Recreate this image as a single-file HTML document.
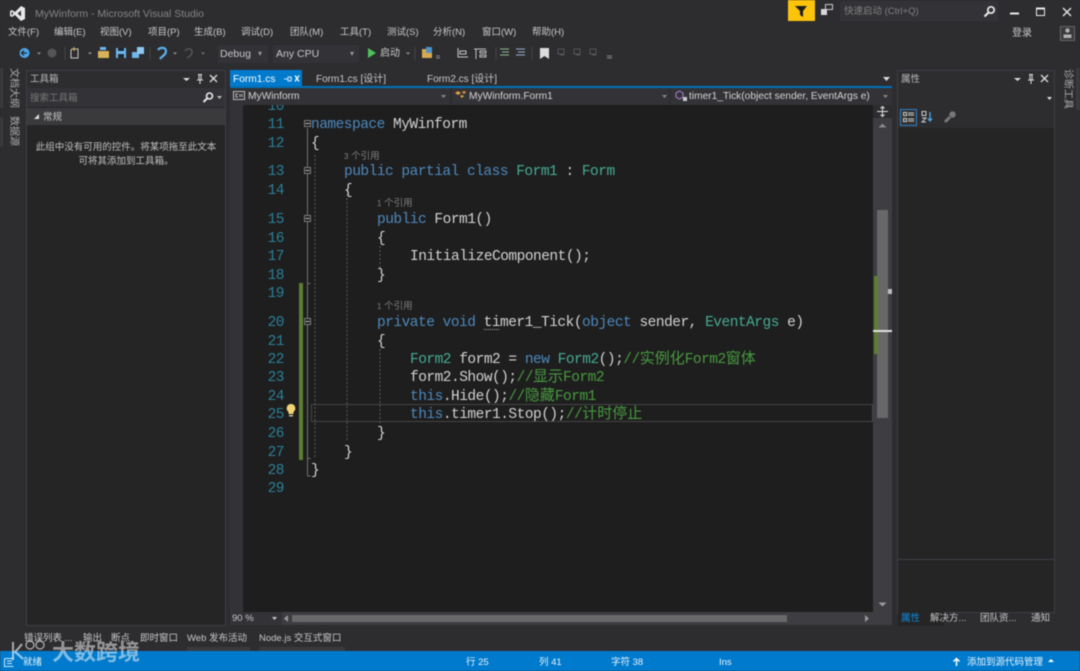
<!DOCTYPE html>
<html><head><meta charset="utf-8">
<style>
html,body{margin:0;padding:0;width:1080px;height:671px;overflow:hidden;background:#2d2d30}
#r{position:absolute;left:0;top:0;width:1080px;height:671px;overflow:hidden;background:#2d2d30;filter:blur(.5px);font-family:"Liberation Sans","Noto Sans CJK SC",sans-serif;font-size:9.5px;color:#c8c8c8}
.t,.b,.l,.n,svg{position:absolute}
.t{white-space:nowrap;line-height:14px}
.b{box-sizing:border-box}
.l{font-family:"Liberation Mono","Noto Sans CJK SC",monospace;font-size:14.5px;letter-spacing:-.5px;line-height:18px;height:18px;white-space:pre;color:#d2d2d2}
.n{font-family:"Liberation Mono",monospace;font-size:14.5px;letter-spacing:-.5px;line-height:18px;color:#2a8098;width:28px;text-align:right;left:256px}
.k{color:#4d88bd}.y{color:#46ab93}.g{color:#489a40}
.g i{font-style:normal;font-size:15px;letter-spacing:0}
.r{font-size:9.5px;color:#808080}
.v{writing-mode:vertical-rl;text-orientation:sideways;font-size:10px;line-height:12px;color:#aaa;position:absolute;white-space:nowrap}
</style></head><body><div id="r">

<!-- title -->
<svg style="left:9px;top:5px" width="17" height="17" viewBox="0 0 17 17"><path d="M12 1l4 2v11l-4 2-6-6-3 2-2-1V6l2-1 3 2zM12 5.500L8.500 8.500 12 11.500zM2.500 6.500v4L4.500 8.500z" fill="#e8e8e8" fill-rule="evenodd"/></svg>
<div class="t" style="left:35px;top:7px;color:#858585;font-size:10.5px">MyWinform - Microsoft Visual Studio</div>
<div class="b" style="left:788px;top:0;width:27px;height:21px;background:#fcc30b"></div>
<svg style="left:787px;top:2px" width="28" height="18" viewBox="0 0 28 18"><path d="M8 4h12l-4 5v6l-3-2V9z" fill="#1c1c1c"/></svg>
<svg style="left:820px;top:3px" width="14" height="14" viewBox="0 0 14 14"><rect x="5.500" y="1.500" width="7" height="5" fill="none" stroke="#c8c8c8"/><rect x="1" y="6" width="6" height="6" fill="#d8d8d8"/></svg>
<div class="b" style="left:840px;top:1px;width:158px;height:20px;background:#333337"></div>
<div class="t" style="left:844px;top:5px;color:#808080;font-size:9.500px">快速启动 (Ctrl+Q)</div>
<svg style="left:983px;top:5px" width="13" height="13" viewBox="0 0 13 13"><circle cx="8" cy="5" r="3.200" fill="none" stroke="#e8e8e8" stroke-width="1.700"/><path d="M5.500 7.500L1.500 11.500" stroke="#e8e8e8" stroke-width="2.200"/></svg>
<svg style="left:1009px;top:5px" width="11" height="14" viewBox="0 0 11 14"><path d="M1 8.500h9" stroke="#e8e8e8" stroke-width="2"/></svg>
<svg style="left:1034px;top:5px" width="13" height="14" viewBox="0 0 13 14"><path d="M2.500 3.500h8v7h-8z" fill="none" stroke="#e8e8e8"/><path d="M2 3.500h9" stroke="#e8e8e8" stroke-width="2"/></svg>
<svg style="left:1061px;top:5px" width="13" height="14" viewBox="0 0 13 14"><path d="M2 3l8 8M10 3l-8 8" stroke="#e8e8e8" stroke-width="1.300"/></svg>

<!-- menu -->
<div class="t" style="left:8px;top:26px">文件(F)</div>
<div class="t" style="left:54px;top:26px">编辑(E)</div>
<div class="t" style="left:100px;top:26px">视图(V)</div>
<div class="t" style="left:148px;top:26px">项目(P)</div>
<div class="t" style="left:194px;top:26px">生成(B)</div>
<div class="t" style="left:241px;top:26px">调试(D)</div>
<div class="t" style="left:290px;top:26px">团队(M)</div>
<div class="t" style="left:340px;top:26px">工具(T)</div>
<div class="t" style="left:387px;top:26px">测试(S)</div>
<div class="t" style="left:433px;top:26px">分析(N)</div>
<div class="t" style="left:482px;top:26px">窗口(W)</div>
<div class="t" style="left:532px;top:26px">帮助(H)</div>
<div class="t" style="left:1012px;top:27px;font-size:10px">登录</div>
<div class="b" style="left:1060px;top:26px;width:15px;height:15px;border:1px solid #666;background:#3a3a3c"></div>
<svg style="left:1061px;top:27px" width="13" height="13" viewBox="0 0 13 13"><circle cx="6.500" cy="3.500" r="2.200" fill="#b0b0b0"/><path d="M2.500 11V7.500h8V11z" fill="#b0b0b0"/></svg>

<!-- toolbar -->
<svg style="left:14px;top:44px" width="600" height="18" viewBox="0 0 600 18">
<circle cx="10.500" cy="9" r="5" fill="#4ea6ea"/><path d="M13 9H8M10 6.500L7.500 9l2.500 2.500" stroke="#1e2a33" fill="none" stroke-width="1.200"/>
<path d="M23 8.500h4l-2 2z" fill="#999"/>
<circle cx="38" cy="9" r="4.500" fill="#555"/>
<path d="M51 3v13" stroke="#444"/>
<path d="M58 5h6v9h-7V6z" fill="none" stroke="#c8c8c8"/><path d="M60 3v4M58 5h4" stroke="#e0c060"/>
<path d="M74 8.500h4l-2 2z" fill="#999"/>
<path d="M84 7h11v7H84z" fill="#d8b25a"/><path d="M86 3h6v3h-6z" fill="#6cb8ee"/>
<path d="M102 4h10v10h-10z" fill="#6cb8ee"/><path d="M104 4h6v3h-6zM104 10h6v4h-6z" fill="#1e2a33"/>
<path d="M118 8h7v6h-7z" fill="#6cb8ee"/><path d="M123 3h7v7h-7z" fill="#8ec8f0"/>
<path d="M136 3v13" stroke="#444"/>
<path d="M144 6c2-3 8-3 8 1s-4 5-6 8" fill="none" stroke="#5ab0ee" stroke-width="2.200"/>
<path d="M159 8.500h4l-2 2z" fill="#999"/>
<path d="M171 7c2-3 7-3 7 1s-3 4-5 6" fill="none" stroke="#555" stroke-width="1.500"/>
<path d="M187 8.500h4l-2 2z" fill="#777"/>
<path d="M354 4l8 5-8 5z" fill="#4ec25a"/>
<path d="M392 8.500h4l-2 2z" fill="#999"/>
<path d="M401 3v13" stroke="#444"/>
<path d="M408 5h10v9h-10z" fill="#d8a94e"/><path d="M412 3h6v6h-6z" fill="#4e92cc"/>
<path d="M422 14h4M422 12h4" stroke="#888"/>
<path d="M444 4v9h10M446 7h6v3h-6z" fill="none" stroke="#c8c8c8"/>
<path d="M460 5h12M462 5v10M466 7h6v2h-6zM466 11h6v2h-6z" fill="none" stroke="#c0c0c0"/>
<path d="M482 3v13" stroke="#444"/>
<path d="M486 5h9M488 8h7M486 11h9" stroke="#8fb88f"/>
<path d="M502 5h9M504 8h7M502 11h9" stroke="#9ab0c8"/>
<path d="M518 3v13" stroke="#444"/>
<path d="M526 4h9v11l-4.500-3-4.500 3z" fill="#dcdcdc"/>
<path d="M544 5h6v5h-6zM546 11h4" stroke="#555" fill="none"/><path d="M560 5h6v5h-6zM562 11h4" stroke="#555" fill="none"/><path d="M576 5h6v5h-6zM578 11h4" stroke="#555" fill="none"/>
<path d="M593 12h5M593 14h5" stroke="#888"/>
</svg>
<div class="b" style="left:218px;top:45px;width:50px;height:18px;background:#333337"></div>
<div class="t" style="left:220px;top:47px;font-size:10.500px">Debug</div>
<div class="t" style="left:258px;top:47px;font-size:8px;color:#999">▾</div>
<div class="b" style="left:273px;top:45px;width:86px;height:18px;background:#333337"></div>
<div class="t" style="left:276px;top:47px;font-size:10.500px">Any CPU</div>
<div class="t" style="left:350px;top:47px;font-size:8px;color:#999">▾</div>
<div class="t" style="left:380px;top:47px;font-size:10px">启动</div>

<!-- left rail -->
<div class="b" style="left:0;top:68px;width:3px;height:40px;background:#3a3a3d"></div>
<div class="b" style="left:0;top:117px;width:3px;height:30px;background:#3a3a3d"></div>
<div class="v" style="left:7px;top:68px">文档大纲</div>
<div class="v" style="left:7px;top:116px">数据源</div>

<!-- toolbox -->
<div class="b" style="left:26px;top:70px;width:200px;height:556px;background:#252526;border:1px solid #3f3f46"></div>
<div class="b" style="left:27px;top:71px;width:198px;height:17px;background:#2d2d30"></div>
<div class="t" style="left:30px;top:73px;font-size:9.500px;color:#bbb">工具箱</div>
<svg style="left:180px;top:73px" width="42" height="12" viewBox="0 0 42 12"><path d="M3 5h7l-3.500 3z" fill="#ddd"/><path d="M18 1.500h4M19 2v5h2V2M17 7h6M20 7v4" stroke="#ddd" fill="none"/><path d="M30 2l7 7M37 2l-7 7" stroke="#ddd" stroke-width="1.300"/></svg>
<div class="b" style="left:27px;top:88px;width:198px;height:19px;background:#333337"></div>
<div class="t" style="left:30px;top:92px;font-size:9.500px;color:#777">搜索工具箱</div>
<svg style="left:202px;top:91px" width="22" height="13" viewBox="0 0 22 13"><circle cx="7.500" cy="5" r="3" fill="none" stroke="#e8e8e8" stroke-width="1.600"/><path d="M5 7.500L1.500 11" stroke="#e8e8e8" stroke-width="2"/><path d="M15 5h5l-2.500 3z" fill="#bbb"/></svg>
<div class="b" style="left:27px;top:108px;width:198px;height:17px;background:#3a3a3d"></div>
<svg style="left:32px;top:112px" width="9" height="9" viewBox="0 0 9 9"><path d="M7 2v5H2z" fill="#ddd"/></svg>
<div class="t" style="left:43px;top:111px;font-size:9.500px">常规</div>
<div class="t" style="left:27px;top:141px;width:198px;text-align:center;font-size:9.500px;color:#c0c0c0;line-height:14px;white-space:normal">此组中没有可用的控件。将某项拖至此文本<br>可将其添加到工具箱。</div>

<!-- tabs -->
<div class="b" style="left:230px;top:70px;width:72px;height:17px;background:#007acc"></div>
<div class="t" style="left:233px;top:73px;color:#fff;font-size:10.200px">Form1.cs</div>
<svg style="left:282px;top:74px" width="18" height="10" viewBox="0 0 18 10"><path d="M2 5h4M6 3v4h3V3zM9 5h1" stroke="#cfe8f8" fill="none"/><path d="M13 1.500l4 6M17 1.500l-4 6" stroke="#fff" stroke-width="1.200"/></svg>
<div class="t" style="left:316px;top:73px;font-size:10px">Form1.cs [设计]</div>
<div class="t" style="left:427px;top:73px;font-size:10px">Form2.cs [设计]</div>
<svg style="left:882px;top:76px" width="9" height="6" viewBox="0 0 9 6"><path d="M1 1h7L4.500 5z" fill="#ddd"/></svg>
<div class="b" style="left:230px;top:86px;width:662px;height:2px;background:#0070b8"></div>

<!-- dropdown row -->
<div class="b" style="left:230px;top:88px;width:662px;height:17px;background:#333337"></div>
<div class="b" style="left:450px;top:88px;width:2px;height:17px;background:#2d2d30"></div>
<div class="b" style="left:669px;top:88px;width:2px;height:17px;background:#2d2d30"></div>
<svg style="left:233px;top:90px" width="13" height="11" viewBox="0 0 13 11"><rect x=".5" y="1.500" width="11" height="8" fill="none" stroke="#bbb"/><path d="M5 4H3v3h2M7 4v3M9 4v3" stroke="#bbb" fill="none"/></svg>
<div class="t" style="left:248px;top:90px;font-size:10.200px;color:#d4d4d4">MyWinform</div>
<svg style="left:454px;top:90px" width="14" height="12" viewBox="0 0 14 12"><path d="M1 3l3-2 3 2-3 2z" fill="#e0a040"/><path d="M6 6l2-1 2 1-2 2zM8 2l2-1 2 1-2 2z" fill="#e0a040"/></svg>
<div class="t" style="left:469px;top:90px;font-size:10.200px;color:#d4d4d4">MyWinform.Form1</div>
<svg style="left:675px;top:90px" width="13" height="12" viewBox="0 0 13 12"><path d="M4.500 1l3.500 2v4L4.500 9 1 7V3z" fill="none" stroke="#b180d7"/><rect x="8" y="7" width="4" height="4" fill="#ccc"/></svg>
<div class="t" style="left:689px;top:90px;font-size:10.200px;color:#d4d4d4">timer1_Tick(object sender, EventArgs e)</div>
<svg style="left:440px;top:94px" width="8" height="5"><path d="M1 1h5L3.500 4z" fill="#888"/></svg>
<svg style="left:661px;top:94px" width="8" height="5"><path d="M1 1h5L3.500 4z" fill="#888"/></svg>
<svg style="left:882px;top:94px" width="8" height="5"><path d="M1 1h5L3.500 4z" fill="#888"/></svg>

<!-- editor -->
<div class="b" style="left:230px;top:105px;width:13px;height:507px;background:#333337"></div>
<div class="b" style="left:243px;top:105px;width:630px;height:507px;background:#1e1e1e"></div>

<!-- current line -->
<div class="b" style="left:311px;top:404px;width:562px;height:18px;border:1px solid #464646"></div>

<!-- change bar -->
<div class="b" style="left:299px;top:283px;width:3.500px;height:177px;background:#5c7f33"></div>

<!-- outlines & guides -->
<svg style="left:295px;top:105px" width="110" height="385" viewBox="295 105 110 385">
<path d="M307.500 128V476M307.500 476h3M307.500 458.500h3M307.500 283.500h3" stroke="#707070" fill="none"/>
<path d="M315 155V458M347 190V442" stroke="#5c5c5c" stroke-dasharray="2 2" fill="none"/>
<path d="M380 246V268M380 349V425" stroke="#5c5c5c" stroke-dasharray="2 2" fill="none"/>
<g fill="#1e1e1e" stroke="#7d7d7d"><rect x="304.500" y="120.500" width="6" height="6"/><rect x="304.500" y="167.500" width="6" height="6"/><rect x="304.500" y="215.500" width="6" height="6"/><rect x="304.500" y="318.500" width="6" height="6"/></g>
<path d="M305.500 123.500h4M305.500 170.500h4M305.500 218.500h4M305.500 321.500h4" stroke="#c0c0c0"/>
</svg>
<svg style="left:484px;top:328px" width="20" height="3"><path d="M0 1.500h16" stroke="#aaa" stroke-dasharray="1 1"/></svg>
<svg style="left:285px;top:403px" width="12" height="15" viewBox="0 0 12 15"><path d="M6 1a4.300 4.300 0 0 1 2.500 7.800V11h-5V8.800A4.300 4.300 0 0 1 6 1z" fill="#f2d374"/><path d="M4 12h4v1.500H4z" fill="#c8c8a8"/></svg>

<!-- line numbers -->
<div class="n" style="top:98px;height:18px;clip-path:inset(7px 0 0 0)">10</div>
<div class="n" style="top:116px">11</div>
<div class="n" style="top:135px">12</div>
<div class="n" style="top:163px">13</div>
<div class="n" style="top:182px">14</div>
<div class="n" style="top:211px">15</div>
<div class="n" style="top:230px">16</div>
<div class="n" style="top:248px">17</div>
<div class="n" style="top:267px">18</div>
<div class="n" style="top:285px">19</div>
<div class="n" style="top:314px">20</div>
<div class="n" style="top:333px">21</div>
<div class="n" style="top:351px">22</div>
<div class="n" style="top:369px">23</div>
<div class="n" style="top:388px">24</div>
<div class="n" style="top:406px">25</div>
<div class="n" style="top:425px">26</div>
<div class="n" style="top:444px">27</div>
<div class="n" style="top:462px">28</div>
<div class="n" style="top:480px">29</div>

<!-- code -->
<div class="l" style="left:311px;top:116px"><span class="k">namespace</span> MyWinform</div>
<div class="l" style="left:311px;top:135px">{</div>
<div class="t r" style="left:344px;top:150px"><span style="font-size:8px">3</span> 个引用</div>
<div class="l" style="left:344px;top:163px"><span class="k">public partial class</span> <span class="y">Form1</span> : <span class="y">Form</span></div>
<div class="l" style="left:344px;top:182px">{</div>
<div class="t r" style="left:377px;top:197px"><span style="font-size:8px">1</span> 个引用</div>
<div class="l" style="left:377px;top:211px"><span class="k">public</span> Form1()</div>
<div class="l" style="left:377px;top:230px">{</div>
<div class="l" style="left:410px;top:248px">InitializeComponent();</div>
<div class="l" style="left:377px;top:267px">}</div>
<div class="t r" style="left:377px;top:300px"><span style="font-size:8px">1</span> 个引用</div>
<div class="l" style="left:377px;top:314px"><span class="k">private void</span> timer1_Tick(<span class="k">object</span> sender, <span class="y">EventArgs</span> e)</div>
<div class="l" style="left:377px;top:333px">{</div>
<div class="l" style="left:410px;top:351px"><span class="y">Form2</span> form2 = <span class="k">new</span> <span class="y">Form2</span>();<span class="g">//<i>实例化</i>Form2<i>窗体</i></span></div>
<div class="l" style="left:410px;top:369px">form2.Show();<span class="g">//<i>显示</i>Form2</span></div>
<div class="l" style="left:410px;top:388px"><span class="k">this</span>.Hide();<span class="g">//<i>隐藏</i>Form1</span></div>
<div class="l" style="left:410px;top:406px"><span class="k">this</span>.timer1.Stop();<span class="g">//<i>计时停止</i></span></div>
<div class="l" style="left:377px;top:425px">}</div>
<div class="l" style="left:344px;top:444px">}</div>
<div class="l" style="left:311px;top:462px">}</div>

<!-- vscroll -->
<div class="b" style="left:873px;top:105px;width:19px;height:520px;background:#3e3e42"></div>
<div class="b" style="left:873px;top:105px;width:19px;height:13px;background:#2d2d30"></div>
<svg style="left:876px;top:105px" width="13" height="13" viewBox="0 0 13 13"><path d="M1 6.500h11M6.500 1.500v10M4.500 3.500l2-2 2 2M4.500 9.500l2 2 2-2" stroke="#ddd" fill="none"/></svg>
<svg style="left:877px;top:122px" width="11" height="7"><path d="M1.500 5.500h8L5.500 1.500z" fill="#888"/></svg>
<div class="b" style="left:877px;top:210px;width:11px;height:208px;background:#686868"></div>
<div class="b" style="left:874px;top:276px;width:4px;height:78px;background:#5c7f33"></div>
<div class="b" style="left:888px;top:289px;width:4px;height:5px;background:#bdbdbd"></div>
<div class="b" style="left:873px;top:330px;width:19px;height:2px;background:#e0e0e0"></div>
<svg style="left:877px;top:601px" width="11" height="7"><path d="M1.500 1.500h8L5.500 5.500z" fill="#999"/></svg>

<!-- hscroll -->
<div class="b" style="left:230px;top:612px;width:643px;height:13px;background:#3e3e42"></div>
<div class="b" style="left:230px;top:612px;width:52px;height:13px;background:#333337"></div>
<div class="t" style="left:232px;top:612px;font-size:9.500px;line-height:13px">90 %</div>
<svg style="left:271px;top:616px" width="7" height="5"><path d="M1 1h5L3.500 4z" fill="#ccc"/></svg>
<svg style="left:283px;top:614px" width="6" height="9"><path d="M5 1v7L1 4.500z" fill="#999"/></svg>
<div class="b" style="left:292px;top:615px;width:495px;height:7px;background:#686868"></div>
<svg style="left:864px;top:614px" width="6" height="9"><path d="M1 1v7l4-3.500z" fill="#999"/></svg>

<!-- properties -->
<div class="b" style="left:897px;top:70px;width:158px;height:543px;background:#252526;border:1px solid #3f3f46"></div>
<div class="b" style="left:898px;top:71px;width:156px;height:17px;background:#2d2d30"></div>
<div class="t" style="left:901px;top:73px;font-size:9.500px;color:#bbb">属性</div>
<svg style="left:1011px;top:73px" width="42" height="12" viewBox="0 0 42 12"><path d="M3 5h7l-3.500 3z" fill="#ddd"/><path d="M18 1.500h4M19 2v5h2V2M17 7h6M20 7v4" stroke="#ddd" fill="none"/><path d="M30 2l7 7M37 2l-7 7" stroke="#ddd" stroke-width="1.300"/></svg>
<div class="b" style="left:898px;top:88px;width:156px;height:19px;background:#2d2d30"></div>
<svg style="left:1046px;top:96px" width="8" height="5"><path d="M1 1h5L3.500 4z" fill="#ddd"/></svg>
<div class="b" style="left:898px;top:107px;width:156px;height:21px;background:#2d2d30"></div>
<div class="b" style="left:900px;top:109px;width:17px;height:17px;border:1px solid #2f7fc0;background:#333"></div>
<svg style="left:902px;top:111px" width="13" height="13" viewBox="0 0 13 13"><path d="M1.500 1.500h3v3h-3zM1.500 7.500h3v3h-3z" fill="none" stroke="#ccc"/><path d="M6 2h6M6 4h6M6 8h6M6 10h6" stroke="#ccc"/></svg>
<svg style="left:920px;top:110px" width="14" height="14" viewBox="0 0 14 14"><path d="M2 1.500h4v4H2zM2 8h4L2 12h4" fill="none" stroke="#ccc"/><path d="M10 2v9M8 8.500l2 2.500 2-2.500" stroke="#4ea6ea" fill="none" stroke-width="1.300"/></svg>
<svg style="left:943px;top:110px" width="14" height="14" viewBox="0 0 14 14"><circle cx="9.500" cy="4.500" r="3.200" fill="#777"/><path d="M7 7l-5 5" stroke="#777" stroke-width="3"/></svg>
<div class="b" style="left:898px;top:559px;width:156px;height:1px;background:#3f3f46"></div>
<div class="b" style="left:898px;top:612px;width:46px;height:14px;background:#252526"></div>
<div class="t" style="left:901px;top:612px;font-size:9.500px;color:#0e8ce0">属性</div>
<div class="t" style="left:930px;top:612px;font-size:9.500px">解决方...</div>
<div class="t" style="left:980px;top:612px;font-size:9.500px">团队资...</div>
<div class="t" style="left:1031px;top:612px;font-size:9.500px">通知</div>

<!-- right rail -->
<div class="b" style="left:1076px;top:68px;width:4px;height:42px;background:#3a3a3d"></div>
<div class="v" style="left:1061px;top:69px">诊断工具</div>

<!-- bottom tabs -->
<div class="t" style="left:24px;top:632px;font-size:9.500px">错误列表 ...</div>
<div class="t" style="left:83px;top:632px;font-size:9.500px">输出</div>
<div class="t" style="left:111px;top:632px;font-size:9.500px">断点</div>
<div class="t" style="left:140px;top:632px;font-size:9.500px">即时窗口</div>
<div class="t" style="left:187px;top:632px;font-size:9.500px">Web 发布活动</div>
<div class="t" style="left:259px;top:632px;font-size:9.500px">Node.js 交互式窗口</div>
<div class="b" style="left:187px;top:647px;width:63px;height:4px;background:#3a3a3d"></div>
<div class="b" style="left:259px;top:647px;width:86px;height:4px;background:#3a3a3d"></div>

<!-- status -->
<div class="b" style="left:0;top:651px;width:1080px;height:20px;background:#007acc"></div>
<svg style="left:3px;top:657px" width="12" height="11" viewBox="0 0 12 11"><path d="M1.500 1.500h9M1.500 1.500v8h9M4 4h5M4 6.500h5" stroke="#cfe8f8" fill="none"/></svg>
<div class="t" style="left:23px;top:656px;font-size:9.500px;color:#e8f4fc">就绪</div>
<div class="t" style="left:466px;top:656px;font-size:9.500px;color:#e8f4fc">行 25</div>
<div class="t" style="left:539px;top:656px;font-size:9.500px;color:#e8f4fc">列 41</div>
<div class="t" style="left:611px;top:656px;font-size:9.500px;color:#e8f4fc">字符 38</div>
<div class="t" style="left:719px;top:656px;font-size:9.500px;color:#e8f4fc">Ins</div>
<svg style="left:951px;top:656px" width="11" height="11" viewBox="0 0 11 11"><path d="M5.500 10V3M2.500 5.500l3-3 3 3" stroke="#fff" stroke-width="1.500" fill="none"/></svg>
<div class="t" style="left:967px;top:656px;font-size:9.500px;color:#e8f4fc">添加到源代码管理</div>
<svg style="left:1047px;top:658px" width="8" height="5"><path d="M1 4h6L4 1z" fill="#fff"/></svg>

<!-- watermark -->
<svg style="left:8px;top:636px" width="46" height="28" viewBox="0 0 46 28" opacity=".6"><path d="M5 6v18M14 8c-3 4-5 6-7 8 3 2 5 4 8 7" fill="none" stroke="#fff" stroke-width="2"/><circle cx="22" cy="9" r="4" fill="none" stroke="#fff" stroke-width="1.300"/><circle cx="32" cy="9" r="4" fill="none" stroke="#fff" stroke-width="1.300"/></svg>
<div class="t" style="left:52px;top:639px;font-size:22px;line-height:28px;color:rgba(255,255,255,.5);font-weight:bold">大数跨境</div>

</div></body></html>
